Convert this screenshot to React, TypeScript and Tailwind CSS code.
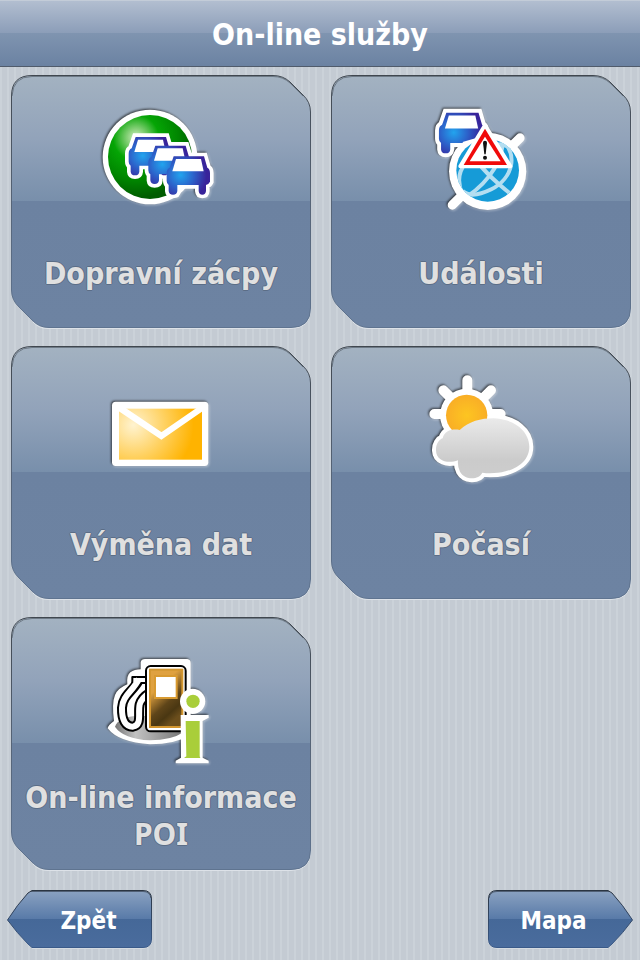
import React from "react";
import type { ReactNode } from "react";

const CAR_BODY =
  "M251 184H342L352 218Q360 222 360 234V260Q356 268 348 270V288Q347 299 337 299T326 288V270H262V288Q261 299 249 299T236 288V270Q230 266 230 258V234Q230 222 239 218Z";

function CarOutline() {
  return <path d={CAR_BODY} fill="#fff" stroke="#fff" strokeWidth="22" strokeLinejoin="miter" />;
}

function Car({ fill }: { fill: string }) {
  return (
    <>
      <path d={CAR_BODY} fill={`url(#${fill})`} />
      <path d="M258 192H333L341 229H247Z" fill="#fff" />
    </>
  );
}

function CarGradient({ id }: { id: string }) {
  return (
    <radialGradient id={id} gradientUnits="userSpaceOnUse" cx="272" cy="240" r="78">
      <stop offset="0" stopColor="#22a4ee" />
      <stop offset="0.5" stopColor="#2c62ca" />
      <stop offset="1" stopColor="#38239a" />
    </radialGradient>
  );
}

function Icon({ viewBox, children }: { viewBox: string; children: ReactNode }) {
  return (
    <svg
      viewBox={viewBox}
      aria-hidden="true"
      className="size-[120px] shrink-0 overflow-visible [filter:drop-shadow(-1px_-1px_1px_#000a)_drop-shadow(1px_1px_1px_#fff6)]"
    >
      {children}
    </svg>
  );
}

function TrafficIcon() {
  return (
    <Icon viewBox="33 18 360 360">
      <defs>
        <CarGradient id="traffic-car" />
        <radialGradient id="traffic-green" gradientUnits="userSpaceOnUse" cx="138" cy="128" r="180">
          <stop offset="0" stopColor="#d2f2c8" />
          <stop offset="0.14" stopColor="#8ad27c" />
          <stop offset="0.38" stopColor="#05a505" />
          <stop offset="0.7" stopColor="#008600" />
          <stop offset="1" stopColor="#005c00" />
        </radialGradient>
      </defs>
      <circle cx="180" cy="186" r="142" fill="#fff" />
      <circle cx="180" cy="186" r="126" fill="url(#traffic-green)" />
      <g transform="translate(-114 -58)"><CarOutline /></g>
      <g transform="translate(-55 -32)"><CarOutline /></g>
      <CarOutline />
      <g transform="translate(-114 -58)"><Car fill="traffic-car" /></g>
      <g transform="translate(-55 -32)"><Car fill="traffic-car" /></g>
      <Car fill="traffic-car" />
    </Icon>
  );
}

function EventsIcon() {
  return (
    <Icon viewBox="3 18 360 360">
      <defs>
        <CarGradient id="events-car" />
        <clipPath id="events-globe"><circle cx="203" cy="226" r="94" /></clipPath>
      </defs>
      <g transform="translate(-187 -142) scale(1.06)"><CarOutline /></g>
      <path d="M97 330L300 129" stroke="#fff" strokeWidth="28" strokeLinecap="round" />
      <circle cx="203" cy="229" r="116" fill="#fff" />
      <g transform="translate(-187 -142) scale(1.06)"><Car fill="events-car" /></g>
      <path d="M108 180Q112 160 130 140L200 120V200H108Z" fill="#fff" />
      <circle cx="203" cy="226" r="94" fill="#169bd7" />
      <g clipPath="url(#events-globe)" fill="none" stroke="#b4def1" strokeWidth="12">
        <path d="M238 132C298 170 280 250 214 283C175 302 145 304 128 288" />
        <path d="M248 150C240 215 190 280 118 318" />
        <path d="M148 165C180 220 225 260 276 300" />
        <path d="M232 148C260 148 285 160 305 190" />
        <path d="M136 205C112 235 112 265 128 300" />
      </g>
      <path d="M195 91L271 214H121Z" fill="#fff" stroke="#fff" strokeWidth="12" strokeLinejoin="round" />
      <path d="M195 101L261 210H131Z" fill="#f00a0a" />
      <path d="M195 125L242 199H149Z" fill="#fff" />
      <path d="M189 143Q189 137 195 137T201 143L197 178H193Z" fill="#111" />
      <circle cx="195" cy="188" r="6" fill="#111" />
    </Icon>
  );
}

function MailIcon() {
  return (
    <Icon viewBox="18 -39 360 360">
      <defs>
        <radialGradient id="mail-gold" gradientUnits="userSpaceOnUse" cx="115" cy="120" r="190">
          <stop offset="0" stopColor="#fff3d0" />
          <stop offset="0.5" stopColor="#ffd160" />
          <stop offset="0.95" stopColor="#ffb300" />
        </radialGradient>
      </defs>
      <rect x="51" y="50" width="289" height="193" rx="11" fill="#fff" />
      <rect x="72" y="71" width="249" height="153" fill="url(#mail-gold)" />
      <path d="M70 66L199 153L325 66" fill="none" stroke="#fff" strokeWidth="19" />
    </Icon>
  );
}

const CLOUD =
  "M63 257C62 237 72 224 83 220C88 197 112 191 134 195C162 169 198 160 235 160C300 162 343 200 343 245C343 295 290 325 225 325Q213 325 202 323C190 347 149 345 135 320Q127 305 129 286C97 298 64 286 63 257Z";

function WeatherIcon() {
  return (
    <Icon viewBox="18 21 360 360">
      <defs>
        <radialGradient id="sun">
          <stop offset="0" stopColor="#fdc521" />
          <stop offset="1" stopColor="#f9ae26" />
        </radialGradient>
        <linearGradient id="cloud" x1="0" y1="0" x2="0" y2="1">
          <stop offset="0" stopColor="#eaeaea" />
          <stop offset="0.7" stopColor="#cbcbcb" />
          <stop offset="1" stopColor="#cdcdcd" />
        </linearGradient>
      </defs>
      <path
        d="M157 150V46M157 147H58M157 147H257M157 147L228 76M157 147L85 76M157 147L88 216"
        stroke="#fff"
        strokeWidth="30"
        strokeLinecap="round"
      />
      <circle cx="155" cy="151" r="80" fill="#fff" />
      <path d={CLOUD} fill="#fff" stroke="#fff" strokeWidth="24" strokeLinejoin="round" />
      <circle cx="155" cy="151" r="62" fill="url(#sun)" />
      <path d={CLOUD} fill="url(#cloud)" />
    </Icon>
  );
}

function FuelInfoIcon() {
  return (
    <Icon viewBox="18 -6 360 360">
      <defs>
        <linearGradient id="pump" x1="0" y1="0" x2="0.5" y2="1">
          <stop offset="0.35" stopColor="#dfa140" />
          <stop offset="0.68" stopColor="#5f4519" />
          <stop offset="0.85" stopColor="#4a3712" />
          <stop offset="1" stopColor="#6b4e1c" />
        </linearGradient>
        <linearGradient id="pump-floor" x1="0" y1="0" x2="1" y2="0">
          <stop offset="0" stopColor="#777" />
          <stop offset="0.3" stopColor="#c2c2c2" />
          <stop offset="1" stopColor="#757575" />
        </linearGradient>
      </defs>
      <path
        d="M38 250Q40 240 57 228Q50 175 60 150Q68 130 97 118Q94 92 106 82Q118 73 137 73V52Q139 42 150 42H277Q287 44 287 54V270Q240 298 165 298Q70 292 38 250Z"
        fill="#fff"
      />
      <path d="M60 245Q70 218 120 213H265V262Q230 286 165 286Q85 282 60 245Z" fill="url(#pump-floor)" />
      <g fill="none" strokeLinejoin="round">
        <path d="M130 108C112 140 83 152 81 188C80 226 92 246 114 245C142 240 128 205 134 178Q140 158 162 145" stroke="#000" strokeWidth="30" />
        <path d="M112 96H158V114H112Z" fill="#fff" stroke="#000" strokeWidth="6" />
        <path d="M132 102C112 140 83 152 81 188C80 226 92 246 114 245C142 240 128 205 134 178Q140 158 166 142" stroke="#fff" strokeWidth="18" />
      </g>
      <rect x="153" y="63" width="119" height="196" rx="14" fill="#fff" stroke="#000" strokeWidth="6" />
      <rect x="165" y="74" width="97" height="172" fill="url(#pump)" stroke="#d3962f" strokeWidth="6" />
      <rect x="180" y="93" width="65" height="66" fill="#fff" stroke="#d89a31" strokeWidth="6" />
      <circle cx="293" cy="169" r="38" fill="#fff" />
      <path d="M257 210H341V218L323 228V338L341 347V355H242V347L258 338Z" fill="#fff" />
      <circle cx="294" cy="169" r="20" fill="#a9ce3a" />
      <path d="M272 228H314V334L316 339H267L274 334Z" fill="#a9ce3a" />
    </Icon>
  );
}

function TilePlate() {
  return (
    <svg
      viewBox="0 0 300 254"
      preserveAspectRatio="none"
      aria-hidden="true"
      className="absolute inset-0 -z-10 size-full overflow-visible"
    >
      <defs>
        <linearGradient id="tile-fill" x1="0" y1="0" x2="0" y2="1">
          <stop offset="0" stopColor="#a3b2c1" />
          <stop offset="0.25" stopColor="#92a3ba" />
          <stop offset="0.5" stopColor="#788fab" />
          <stop offset="0.5" stopColor="#6c82a1" />
          <stop offset="1" stopColor="#6d83a2" />
        </linearGradient>
        <linearGradient id="tile-edge" x1="0" y1="0" x2="0" y2="1">
          <stop offset="0" stopColor="#40474f" />
          <stop offset="0.5" stopColor="#566477" />
          <stop offset="1" stopColor="#5f7490" />
        </linearGradient>
      </defs>
      <path d="M22 247Q28 253.500 36 253.500H280Q299.500 253.500 299.500 234" fill="none" stroke="#dde2e8" />
      <path
        d="M21 0.500H262Q272 0.500 279 7L292 20Q299.500 27 299.500 37V233Q299.500 252.500 280 252.500H38Q28 252.500 21 245L8 232Q0.500 225 0.500 215V21Q0.500 0.500 21 0.500Z"
        fill="url(#tile-fill)"
        stroke="url(#tile-edge)"
      />
      <path d="M1 21Q2 1.500 21 1.500H262Q272 1.500 279 8L292 21" fill="none" stroke="#4b555f" strokeOpacity="0.6" />
    </svg>
  );
}

function Tile({ icon, children }: { icon: ReactNode; children: ReactNode }) {
  return (
    <button
      type="button"
      className="relative isolate flex h-[254px] flex-col items-center pt-[26px] text-[30px] leading-[36px] font-bold text-[#e0e0e0] [text-shadow:1px_0_#5b6d86,-1px_0_#5b6d86,0_1px_#5b6d86,0_-1px_#5b6d86]"
    >
      <TilePlate />
      {icon}
      <span className="flex h-[106px] items-center justify-center px-2">
        <span>{children}</span>
      </span>
    </button>
  );
}

function NavButton({ flip = false, children }: { flip?: boolean; children: ReactNode }) {
  return (
    <button
      type="button"
      className={`relative isolate flex h-[58px] w-[145px] items-center justify-center pt-1 text-2xl font-bold text-white ${flip ? "pr-[14px]" : "pl-[18px]"}`}
    >
      <svg
        viewBox="0 0 145 58"
        aria-hidden="true"
        className={`absolute inset-0 -z-10 size-full overflow-visible ${flip ? "-scale-x-100" : ""}`}
      >
        <defs>
          <linearGradient id="nav-fill" x1="0" y1="0" x2="0" y2="1">
            <stop offset="0" stopColor="#8ba2c1" />
            <stop offset="0.5" stopColor="#587aa8" />
            <stop offset="0.5" stopColor="#456898" />
            <stop offset="1" stopColor="#4a6c9d" />
          </linearGradient>
          <linearGradient id="nav-edge" x1="0" y1="0" x2="0" y2="1">
            <stop offset="0" stopColor="#2b3542" />
            <stop offset="1" stopColor="#3a5a89" />
          </linearGradient>
        </defs>
        <path d="M25 58.500H136Q144 58 145 50" fill="none" stroke="#d5dbe1" />
        <path
          d="M25 0.500H136Q144.500 0.500 144.500 9V49Q144.500 57.500 136 57.500H25L21 54Q10 43 0.500 30Q10 15 21 3Z"
          fill="url(#nav-fill)"
          stroke="url(#nav-edge)"
          strokeLinejoin="round"
        />
        <path d="M24 1.500H136Q143 1.500 144 8" fill="none" stroke="#2b3542" strokeOpacity="0.6" />
      </svg>
      {children}
    </button>
  );
}

export default function App() {
  return (
    <div className="flex min-h-screen flex-col bg-[repeating-linear-gradient(90deg,#cbd2d9_0px,#cbd2d9_2px,#c4cbd3_2px,#c4cbd3_7px)] font-['DejaVu_Sans_Condensed','DejaVu_Sans',sans-serif]">
      <header className="flex h-[67px] items-center justify-center border-t border-b border-t-[#c3ccd8] border-b-[#505b6b] bg-[linear-gradient(#b2bed0,#8b9db8_50%,#7f94b0_50%,#6b82a2)] pt-0.5">
        <h1 className="text-[30px] leading-[36px] font-bold text-white">On-line služby</h1>
      </header>
      <main className="grid grid-cols-2 gap-x-5 gap-y-[17px] pt-2 pr-[9px] pl-[11px]">
        <Tile icon={<TrafficIcon />}>Dopravní zácpy</Tile>
        <Tile icon={<EventsIcon />}>Události</Tile>
        <Tile icon={<MailIcon />}>Výměna dat</Tile>
        <Tile icon={<WeatherIcon />}>Počasí</Tile>
        <Tile icon={<FuelInfoIcon />}>
          On-line informace <span className="font-['Noto_Sans',sans-serif]">POI</span>
        </Tile>
      </main>
      <nav className="mt-auto flex justify-between px-[7px] pt-[19px] pb-3">
        <NavButton>Zpět</NavButton>
        <NavButton flip>Mapa</NavButton>
      </nav>
    </div>
  );
}
